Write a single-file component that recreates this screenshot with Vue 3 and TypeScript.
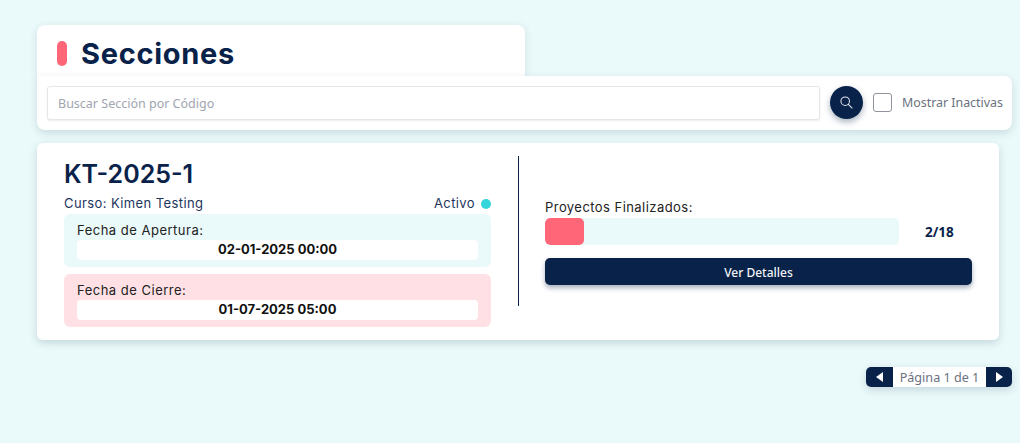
<script setup lang="ts">
import { ref } from 'vue'

const search = ref('')
const showInactive = ref(false)

const section = {
  code: 'KT-2025-1',
  course: 'Kimen Testing',
  opens: '02-01-2025 00:00',
  closes: '01-07-2025 05:00',
  done: 2,
  total: 18
}

const progress = (section.done / section.total) * 100
</script>

<template>
  <div class="page">
    <div class="title-card">
      <span class="title-mark"></span>
      <h1>Secciones</h1>
    </div>

    <div class="search-bar">
      <input v-model="search" class="search-input" type="text" placeholder="Buscar Sección por Código" />
      <button class="search-btn" type="button" aria-label="Buscar">
        <svg width="13" height="13" viewBox="0 0 14 14" fill="none" stroke="#e6e9ee" stroke-width="1.1" stroke-linecap="round">
          <circle cx="5.6" cy="5.6" r="4.6" />
          <path d="M9 9l4 4" />
        </svg>
      </button>
      <label class="inactive">
        <input v-model="showInactive" class="check" type="checkbox" />
        <span>Mostrar Inactivas</span>
      </label>
    </div>

    <div class="section-card">
      <div class="info">
        <h2>{{ section.code }}</h2>
        <div class="course-row">
          <span>Curso: {{ section.course }}</span>
          <span class="status">Activo <i class="dot"></i></span>
        </div>
        <div class="date-box open">
          <div class="date-label">Fecha de Apertura:</div>
          <div class="date-value">{{ section.opens }}</div>
        </div>
        <div class="date-box close">
          <div class="date-label">Fecha de Cierre:</div>
          <div class="date-value">{{ section.closes }}</div>
        </div>
      </div>

      <div class="progress-col">
        <div class="progress-label">Proyectos Finalizados:</div>
        <div class="progress-row">
          <div class="track">
            <div class="fill" :style="{ width: progress + '%' }"></div>
          </div>
          <span class="count">{{ section.done }}/{{ section.total }}</span>
        </div>
        <button class="details" type="button">Ver Detalles</button>
      </div>
    </div>

    <div class="pager-row">
      <div class="pager">
        <button type="button" aria-label="Anterior">
          <svg width="7" height="10" viewBox="0 0 7 10"><path d="M7 0v10L0 5z" fill="#fff" /></svg>
        </button>
        <span>Página 1 de 1</span>
        <button class="next" type="button" aria-label="Siguiente">
          <svg width="7" height="10" viewBox="0 0 7 10"><path d="M0 0v10l7-5z" fill="#fff" /></svg>
        </button>
      </div>
    </div>
  </div>
</template>

<style>
html,
body {
  margin: 0;
  background: #eafafa;
}
</style>

<style scoped>
* {
  box-sizing: border-box;
}
.page {
  height: 443px;
  padding: 25px 8px 0 37px;
  background: #eafafa;
  font-family: 'Noto Sans', sans-serif;
  color: #082249;
  overflow: hidden;
}
.title-card {
  width: 488px;
  height: 51px;
  display: flex;
  align-items: flex-start;
  gap: 14px;
  padding: 16px 20px 0;
  background: #fff;
  border-radius: 8px 8px 0 0;
  box-shadow: 0 2px 8px rgba(6, 33, 72, 0.12);
}
.title-mark {
  width: 10px;
  height: 25px;
  border-radius: 5px;
  background: #ff6678;
}
h1 {
  margin: -5px 0 0;
  font-family: Inter, sans-serif;
  font-size: 29px;
  line-height: 36px;
  font-weight: 700;
  letter-spacing: 0.7px;
}
.search-bar {
  position: relative;
  height: 54px;
  display: flex;
  align-items: flex-start;
  padding: 10px 0 10px 10px;
  background: #fff;
  border-radius: 0 8px 8px 8px;
  box-shadow: 0 3px 8px rgba(6, 33, 72, 0.14);
}
.search-input {
  flex: none;
  width: 773px;
  height: 34px;
  padding: 0 10px;
  border: 1px solid #e4e6e8;
  border-radius: 3px;
  box-shadow: 0 1px 2px rgba(0, 0, 0, 0.08);
  font-family: inherit;
  font-size: 12.5px;
  outline: none;
}
.search-input::placeholder {
  color: #a0a5b0;
}
.search-btn {
  flex: none;
  width: 33px;
  height: 33px;
  margin-left: 10px;
  padding: 0;
  display: flex;
  align-items: center;
  justify-content: center;
  border: none;
  border-radius: 50%;
  background: #082249;
  box-shadow: 0 3px 6px rgba(6, 33, 72, 0.35);
}
.inactive {
  display: flex;
  align-items: center;
  gap: 10px;
  height: 33px;
  margin-left: 10px;
  font-size: 12.4px;
  color: #6b7280;
  white-space: nowrap;
}
.check {
  appearance: none;
  width: 19px;
  height: 19px;
  margin: 0;
  border: 1px solid #8f949c;
  border-radius: 3px;
  background: #fff;
}
.section-card {
  width: 962px;
  height: 197px;
  margin-top: 13px;
  display: flex;
  align-items: flex-start;
  padding: 13px 27px 0;
  background: #fff;
  border-radius: 6px;
  box-shadow: 0 3px 8px rgba(6, 33, 72, 0.16);
  font-family: Inter, sans-serif;
}
.info {
  width: 427px;
}
h2 {
  margin: 0;
  height: 34px;
  font-size: 25px;
  line-height: 36px;
  font-weight: 600;
}
.course-row {
  display: flex;
  justify-content: space-between;
  height: 24px;
  font-size: 13px;
  line-height: 27px;
  letter-spacing: 0.4px;
  color: #1d3660;
}
.status {
  display: flex;
  align-items: center;
  gap: 6px;
  height: 27px;
}
.dot {
  width: 10px;
  height: 10px;
  border-radius: 50%;
  background: #33d6da;
}
.date-box {
  height: 53px;
  padding: 6px 13px 0;
  border-radius: 6px;
  color: #222;
}
.date-box.open {
  background: #eaf9fa;
}
.date-box.close {
  margin-top: 7px;
  background: #ffe1e5;
}
.date-label {
  height: 20px;
  font-size: 13px;
  line-height: 20px;
  letter-spacing: 0.5px;
}
.date-value {
  height: 20px;
  background: #fff;
  border-radius: 4px;
  text-align: center;
  color: #111;
  font-size: 13px;
  line-height: 19px;
  font-weight: 700;
}
.progress-col {
  width: 454px;
  height: 150px;
  margin-left: 27px;
  padding: 41px 0 0 26px;
  border-left: 1px solid #082249;
  color: #222;
}
.progress-label {
  height: 21px;
  font-size: 13px;
  line-height: 21px;
  letter-spacing: 0.45px;
}
.progress-row {
  display: flex;
  align-items: center;
}
.track {
  width: 354px;
  height: 27px;
  background: #eaf9fa;
  border-radius: 5px;
  overflow: hidden;
}
.fill {
  height: 100%;
  background: #ff6678;
  border-radius: 5px;
}
.count {
  margin-left: 26px;
  font-family: 'Noto Sans', sans-serif;
  font-size: 13.5px;
  font-weight: 700;
  color: #082249;
}
.details {
  width: 427px;
  height: 27px;
  margin-top: 13px;
  padding: 1px 0 0;
  border: none;
  border-radius: 5px;
  background: #082249;
  box-shadow: 0 3px 5px rgba(6, 33, 72, 0.35);
  color: #f2f4f7;
  font-family: 'Noto Sans', sans-serif;
  font-size: 12px;
  font-weight: 500;
}
.pager-row {
  display: flex;
  justify-content: flex-end;
  margin-top: 27px;
}
.pager {
  display: flex;
  align-items: center;
  height: 20px;
  background: #fff;
  border-radius: 5px;
  overflow: hidden;
  box-shadow: 0 3px 8px rgba(6, 33, 72, 0.16);
  font-size: 12.6px;
  color: #6b7280;
}
.pager span {
  width: 93px;
  text-align: center;
}
.pager button {
  width: 27px;
  height: 20px;
  padding: 0;
  display: flex;
  align-items: center;
  justify-content: center;
  border: none;
  background: #082249;
}
.pager button.next {
  width: 26px;
}
</style>
